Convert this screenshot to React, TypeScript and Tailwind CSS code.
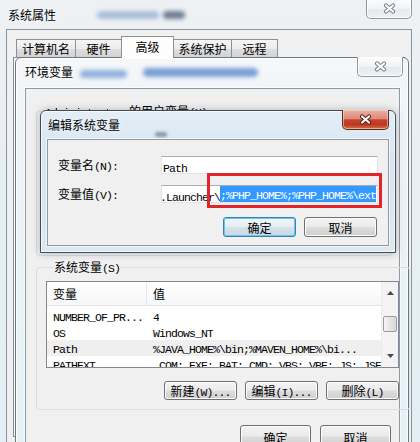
import React from "react";

const CJK = /[\u2e80-\u9fff\uff00-\uffef\u3000-\u303f]/;

function Mx({ text, className = "" }: { text: string; className?: string }) {
  const parts: { s: string; c: boolean }[] = [];
  for (const ch of text) {
    const c = CJK.test(ch);
    const last = parts[parts.length - 1];
    if (last && last.c === c) last.s += ch;
    else parts.push({ s: ch, c });
  }
  return (
    <span className={`whitespace-pre ${className}`}>
      {parts.map((p, i) =>
        p.c ? (
          <span key={i} className="font-['Noto_Sans_CJK_SC',sans-serif] text-[12px] tracking-normal">
            {p.s}
          </span>
        ) : (
          <span key={i} className="font-['Liberation_Mono',monospace] text-[11.5px] tracking-[-0.9px]">
            {p.s}
          </span>
        )
      )}
    </span>
  );
}

function XGlyph({ red }: { red?: boolean }) {
  return (
    <svg width="13" height="11" viewBox="0 0 13 11">
      <path d="M3 2.5 L10 8.5 M10 2.5 L3 8.5" stroke={red ? "#5a1e14" : "#77828d"} strokeWidth="4.2" strokeLinecap="round" />
      <path d="M3 2.5 L10 8.5 M10 2.5 L3 8.5" stroke="#ffffff" strokeWidth="2.2" strokeLinecap="round" />
    </svg>
  );
}

function CloseBtn() {
  return (
    <div className="flex h-[20px] w-[46px] items-center justify-center rounded-b-[5px] border border-t-0 border-[#8e99a4] bg-[linear-gradient(180deg,#fbfcfd_0%,#f1f4f6_50%,#e4e9ed_52%,#eef2f5_100%)] shadow-[inset_0_0_0_1px_rgba(255,255,255,0.85)]">
      <XGlyph />
    </div>
  );
}

function RedCloseBtn() {
  return (
    <div className="flex h-[20px] w-[47px] items-center justify-center rounded-b-[5px] border border-t-0 border-[#5b2a20] bg-[linear-gradient(180deg,#eab0a3_0%,#dc8c7a_45%,#c6432b_52%,#bd3820_78%,#d8744f_100%)] shadow-[inset_0_0_0_1px_rgba(255,220,210,0.55)]">
      <XGlyph red />
    </div>
  );
}

const btnNormal =
  "flex items-center justify-center rounded-[3px] border border-[#707070] bg-[linear-gradient(180deg,#f3f3f3_0%,#ebebeb_48%,#dddddd_52%,#cfcfcf_100%)] shadow-[inset_0_0_0_1px_#fcfcfc] leading-[16px]";

export default function App() {
  return (
    <div className="relative flex h-[442px] w-[420px] flex-col overflow-hidden bg-[linear-gradient(180deg,#eef1f4_0%,#e9eff3_30%,#e2eff4_100%)] font-['Noto_Sans_CJK_SC',sans-serif] text-black">
      {/* Outer window title bar */}
      <div className="flex h-[29px] shrink-0 items-start">
        <div className="pl-[8px] pt-[7px] text-[12px] leading-[16px] [text-shadow:0_0_6px_#fff]">系统属性</div>
        <div className="ml-[41px] mt-[11px] h-[8px] w-[62px] rounded-full bg-[#a9bfd8] blur-[2px]" />
        <div className="ml-[4px] mt-[11px] h-[8px] w-[22px] rounded-full bg-[#6d7e92] blur-[2px]" />
        <div className="-mt-[1px] ml-auto mr-[8px]">
          <CloseBtn />
        </div>
      </div>

      {/* Outer window body */}
      <div className="ml-[6px] mr-[8px] flex flex-1 flex-col border border-b-0 border-[#87939e] bg-[#f0f0f0]">
        <div className="flex h-[28px] shrink-0 items-end pl-[9px]">
          <div className="mb-[1px] flex h-[18px] w-[60px] items-center justify-center border border-b-0 border-[#8e8f8f] bg-[linear-gradient(180deg,#f6f6f6_0%,#ececec_50%,#dedede_52%,#d3d3d3_100%)] text-[12px]">
            计算机名
          </div>
          <div className="-ml-[1px] mb-[1px] flex h-[18px] w-[47px] items-center justify-center border border-b-0 border-[#8e8f8f] bg-[linear-gradient(180deg,#f6f6f6_0%,#ececec_50%,#dedede_52%,#d3d3d3_100%)] text-[12px]">
            硬件
          </div>
          <div className="relative z-10 -ml-[1px] flex h-[22px] w-[53px] items-center justify-center border border-b-0 border-[#8e8f8f] bg-[#fdfdfd] pb-[2px] text-[12px]">
            高级
          </div>
          <div className="-ml-[1px] mb-[1px] flex h-[18px] w-[59px] items-center justify-center border border-b-0 border-[#8e8f8f] bg-[linear-gradient(180deg,#f6f6f6_0%,#ececec_50%,#dedede_52%,#d3d3d3_100%)] text-[12px]">
            系统保护
          </div>
          <div className="-ml-[1px] mb-[1px] flex h-[18px] w-[47px] items-center justify-center border border-b-0 border-[#8e8f8f] bg-[linear-gradient(180deg,#f6f6f6_0%,#ececec_50%,#dedede_52%,#d3d3d3_100%)] text-[12px]">
            远程
          </div>
        </div>
        <div className="-mt-[1px] ml-[6px] mr-[6px] h-[380px] border border-[#898c95] bg-[#fcfcfc]" />
      </div>

      {/* Environment variables window */}
      <div className="absolute left-[15px] top-[57px] flex h-[400px] w-[394px] flex-col rounded-t-[6px] border border-[#6b7886] bg-[linear-gradient(180deg,#f5f7f9_0%,#eef3f6_20%,#e6f1f5_100%)] shadow-[inset_0_0_0_1px_rgba(255,255,255,0.8)]">
        <div className="flex h-[30px] shrink-0 items-start">
          <div className="pl-[9px] pt-[6px] text-[12px] leading-[16px] [text-shadow:0_0_6px_#fff]">环境变量</div>
          <div className="ml-[7px] mt-[12px] h-[8px] w-[47px] rounded-full bg-[#8fb0dd] blur-[2px]" />
          <div className="ml-[16px] mt-[10px] h-[9px] w-[115px] rounded-full bg-[#7a9fd6] blur-[2px]" />
          <div className="-mt-[1px] ml-auto mr-[5px]">
            <CloseBtn />
          </div>
        </div>
        <div className="ml-[9px] mr-[8px] flex flex-1 flex-col border border-[#8d99a5] bg-[#f0f0f0] pl-[10px] pr-[7px] shadow-[0_0_0_1px_rgba(255,255,255,0.6)]">
          <fieldset className="mt-[12px] h-[155px] rounded-[3px] border border-[#d5dfe5]">
            <legend className="ml-[7px] px-[1px] leading-[16px]">
              <span className="blur-[0.7px]">
                <Mx text="Administrator" />
              </span>
              <Mx text=" 的用户变量(U)" />
            </legend>
          </fieldset>

          <fieldset className="mt-[1px] rounded-[3px] border border-[#d5dfe5] pb-[9px] pl-[9px] pr-[10px] pt-[4px]">
            <legend className="ml-[7px] px-[1px] leading-[16px]">
              <Mx text="系统变量(S)" />
            </legend>
            <div className="flex h-[87px] border border-[#828790] bg-white">
              <div className="flex min-w-0 flex-1 flex-col overflow-hidden">
                <div className="flex h-[24px] shrink-0 border-b border-[#e5e5e5] bg-[linear-gradient(180deg,#ffffff,#f6f7f9)] text-[12px]">
                  <div className="flex w-[100px] items-center border-r border-[#e3e8ee] pl-[6px]">变量</div>
                  <div className="flex items-center pl-[6px]">值</div>
                </div>
                <div className="flex flex-col pt-[2px] leading-[16px]">
                  {[
                    ["NUMBER_OF_PR...", "4", false],
                    ["OS", "Windows_NT", false],
                    ["Path", "%JAVA_HOME%\\bin;%MAVEN_HOME%\\bi...", true],
                    ["PATHEXT", ".COM;.EXE;.BAT;.CMD;.VBS;.VBE;.JS;.JSE", false],
                  ].map(([k, v, sel]) => (
                    <div key={k as string} className={`flex h-[16px] shrink-0 items-center ${sel ? "bg-[#efefef]" : ""}`}>
                      <div className="w-[100px] shrink-0 overflow-hidden pl-[6px]">
                        <Mx text={k as string} />
                      </div>
                      <div className="overflow-hidden whitespace-nowrap pl-[6px]">
                        <Mx text={v as string} />
                      </div>
                    </div>
                  ))}
                </div>
              </div>
              <div className="flex w-[17px] shrink-0 flex-col border-l border-[#ececec] bg-[#f3f3f3]">
                <div className="flex h-[22px] items-center justify-center">
                  <svg width="7" height="4" viewBox="0 0 7 4">
                    <path d="M0 4 L3.5 0 L7 4 Z" fill="#4a4a4a" />
                  </svg>
                </div>
                <div className="mx-[1px] mt-[12px] h-[16px] rounded-[2px] border border-[#9c9c9c] bg-[linear-gradient(90deg,#f6f6f6,#e6e6e6_50%,#d6d6d6)]" />
                <div className="flex-1" />
                <div className="flex h-[22px] items-center justify-center">
                  <svg width="7" height="4" viewBox="0 0 7 4">
                    <path d="M0 0 L3.5 4 L7 0 Z" fill="#4a4a4a" />
                  </svg>
                </div>
              </div>
            </div>
            <div className="mt-[13px] flex justify-end gap-[8px]">
              <div className={`${btnNormal} h-[19px] w-[73px]`}>
                <Mx text="新建(W)..." />
              </div>
              <div className={`${btnNormal} h-[19px] w-[73px]`}>
                <Mx text="编辑(I)..." />
              </div>
              <div className={`${btnNormal} h-[19px] w-[73px]`}>
                <Mx text="删除(L)" />
              </div>
            </div>
          </fieldset>

          <div className="mt-[15px] flex justify-end gap-[9px] pr-[1px]">
            <div className={`${btnNormal} h-[23px] w-[71px]`}>
              <Mx text="确定" />
            </div>
            <div className={`${btnNormal} h-[23px] w-[71px]`}>
              <Mx text="取消" />
            </div>
          </div>
        </div>
      </div>

      {/* Edit system variable dialog */}
      <div className="absolute left-[40px] top-[110px] flex h-[143px] w-[356px] flex-col rounded-t-[6px] border border-[#3e4d5b] bg-[linear-gradient(180deg,#e3edf6_0%,#d6e5f1_35%,#dbe8f2_100%)] shadow-[inset_0_0_0_1px_rgba(255,255,255,0.7),0_0_8px_rgba(0,0,0,0.25)]">
        <div className="flex h-[28px] shrink-0 items-start">
          <div className="pl-[7px] pt-[6px] text-[12px] leading-[16px] [text-shadow:0_0_6px_#fff]">编辑系统变量</div>
          <div className="ml-[35px] mt-[21px] h-[5px] w-[12px] rounded-full bg-[#8c98a6] blur-[1.5px]" />
          <div className="-mt-[1px] ml-auto mr-[6px]">
            <RedCloseBtn />
          </div>
        </div>
        <div className="relative mx-[6px] mb-[6px] flex flex-1 flex-col border border-[#8d99a5] bg-[#f0f0f0] pl-[10px] pr-[10px] pt-[15px] shadow-[0_0_0_1px_rgba(255,255,255,0.6)]">
          <div className="grid grid-cols-[103px_1fr] items-center gap-y-[9px]">
            <div className="leading-[16px]">
              <Mx text="变量名(N):" />
            </div>
            <div className="flex h-[18px] items-center border border-[#e2e3ea] border-t-[#abadb3] bg-white pl-[1px]">
              <Mx text="Path" />
            </div>
            <div className="leading-[16px]">
              <Mx text="变量值(V):" />
            </div>
            <div className="flex h-[18px] items-center overflow-hidden border border-[#e2e3ea] border-t-[#abadb3] bg-white">
              <span className="-ml-[8px] flex items-center whitespace-nowrap">
                <Mx text="e.Launcher\" />
                <span className="bg-[#3399ff] leading-[14px] text-white">
                  <Mx text=";%PHP_HOME%;%PHP_HOME%\ext" />
                </span>
              </span>
            </div>
          </div>
          <div className="mt-[13px] flex justify-end gap-[8px] pr-[1px]">
            <div className="flex h-[20px] w-[73px] items-center justify-center rounded-[3px] border border-[#3c7fb1] bg-[linear-gradient(180deg,#f1f6f9_0%,#e6eef3_48%,#d6e2ea_52%,#c9d8e2_100%)] leading-[16px] shadow-[inset_0_0_0_1px_#62c9f2]">
              <Mx text="确定" />
            </div>
            <div className={`${btnNormal} h-[20px] w-[73px]`}>
              <Mx text="取消" />
            </div>
          </div>
          <div className="absolute left-[159px] top-[33px] h-[35px] w-[175px] border-[3px] border-[#e3252b]" />
        </div>
      </div>
    </div>
  );
}
